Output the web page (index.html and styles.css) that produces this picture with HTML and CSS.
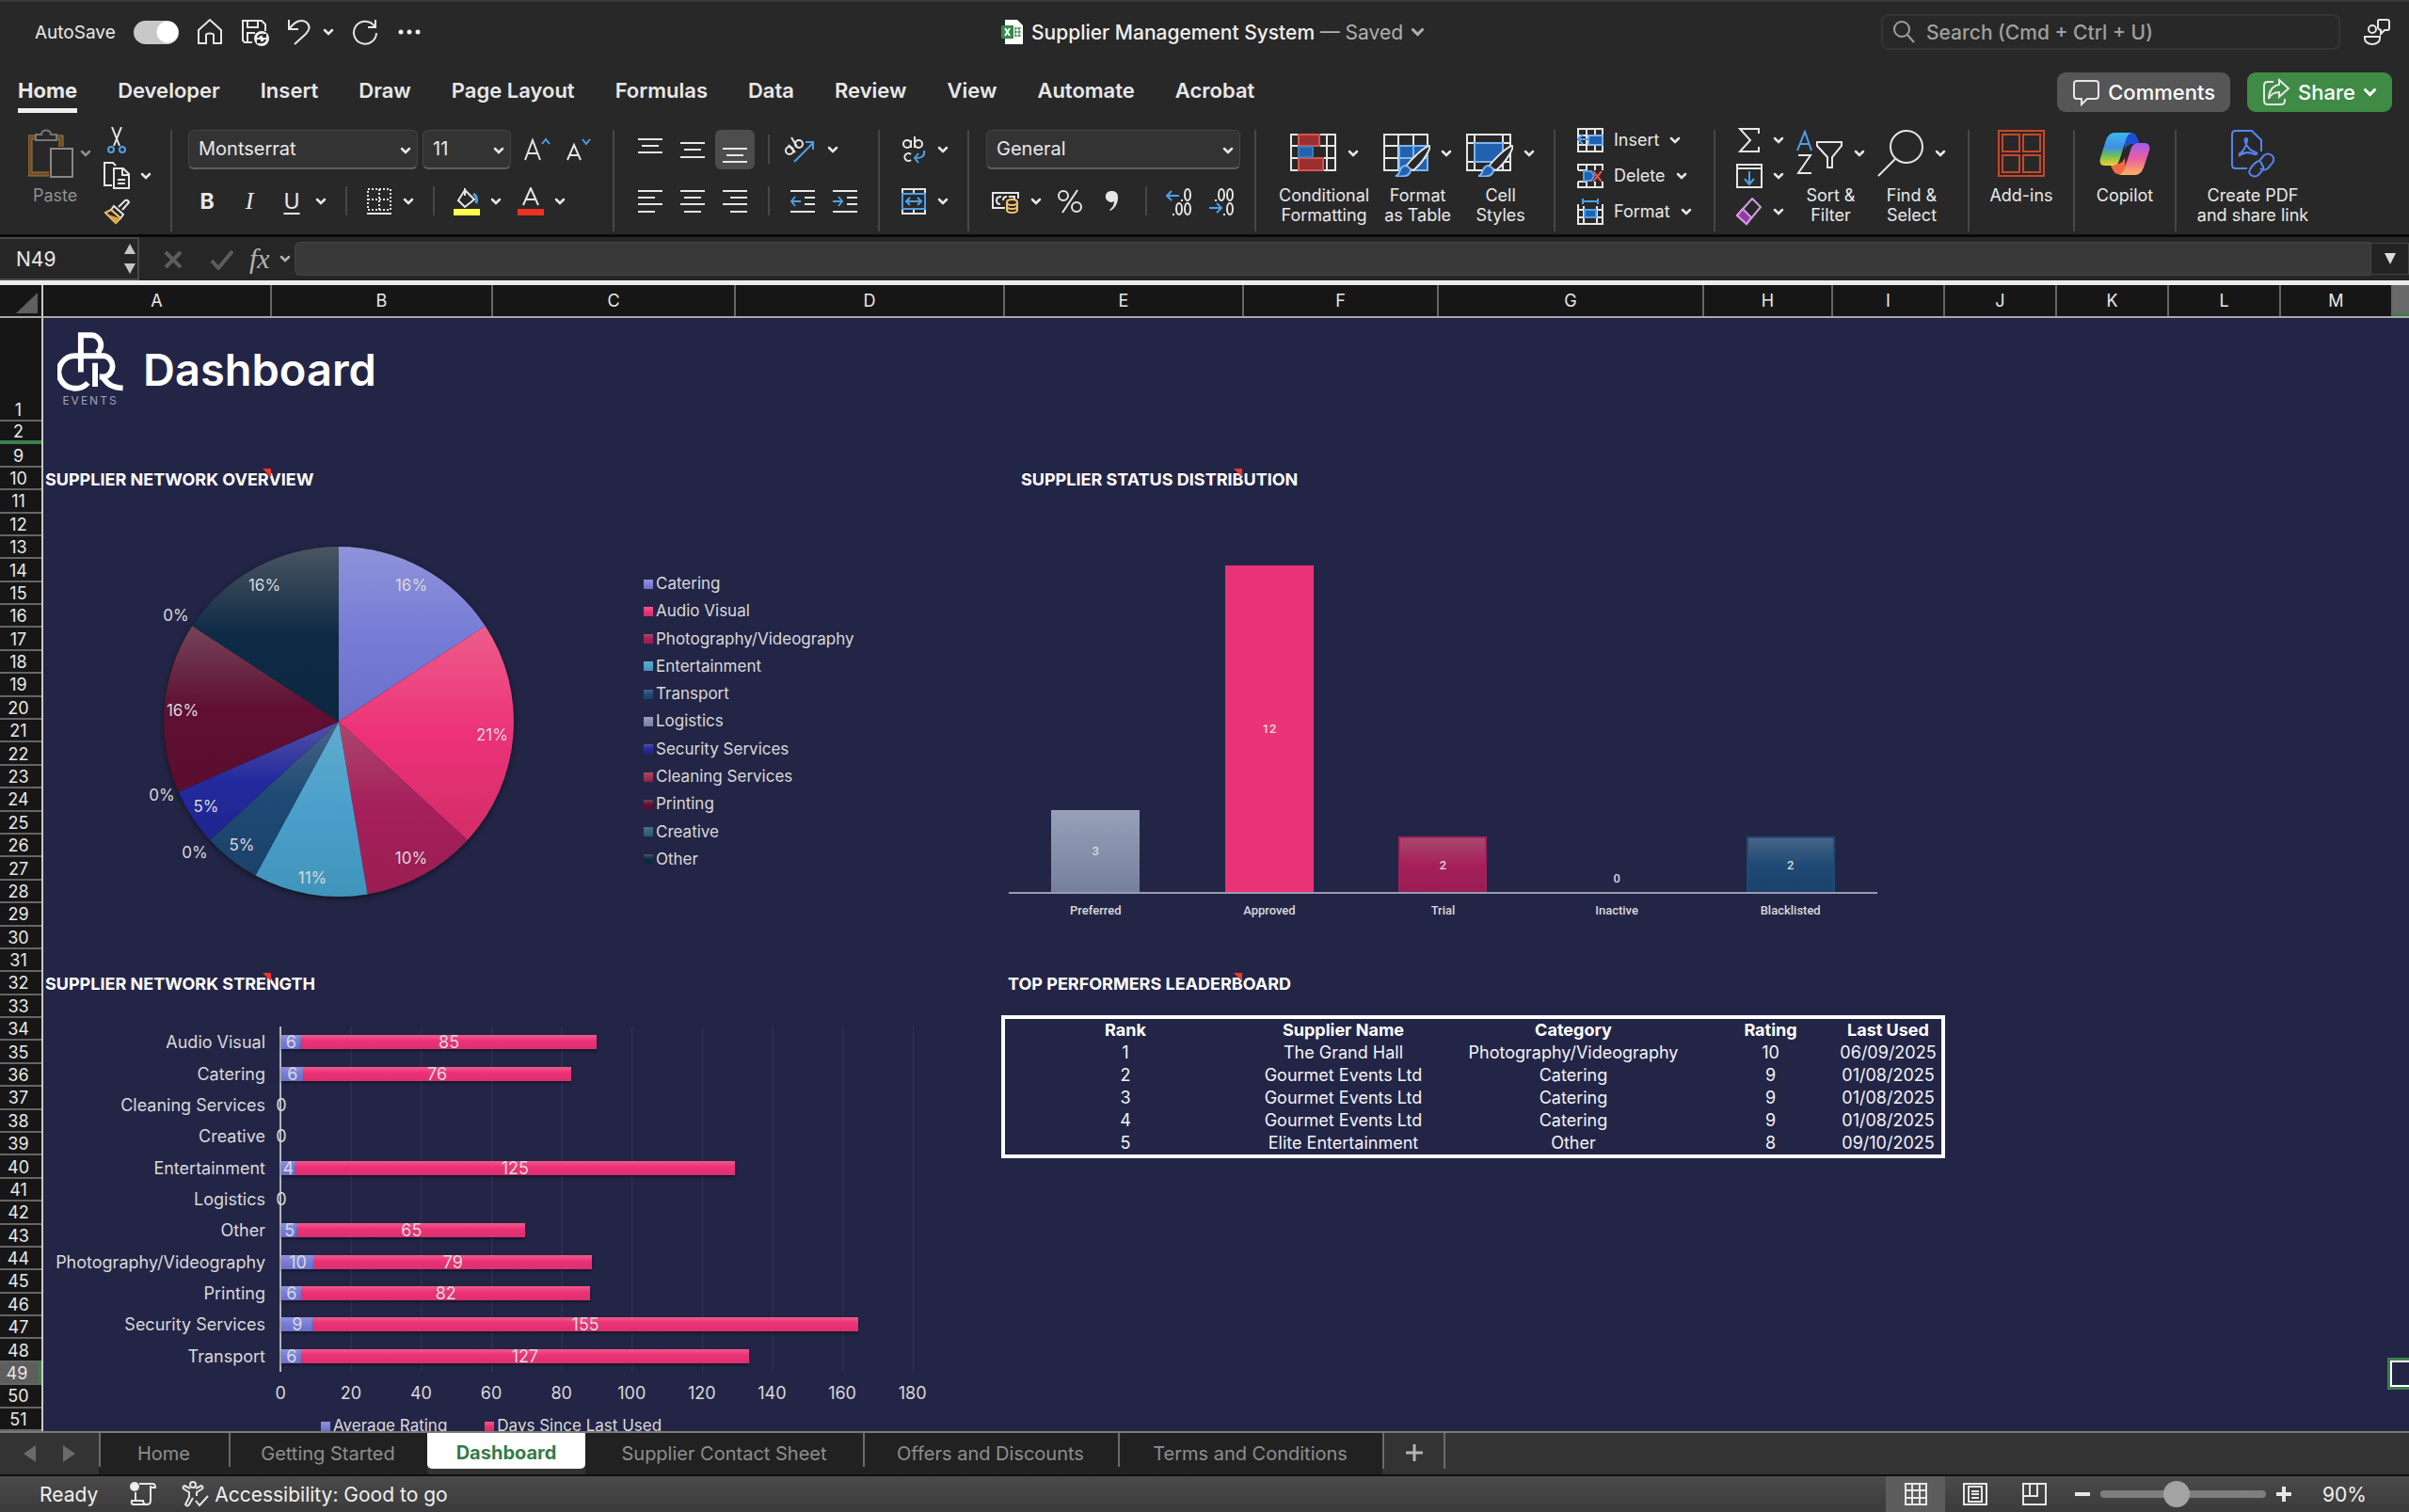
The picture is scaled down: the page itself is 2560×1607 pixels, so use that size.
FILE: index.html
```html
<!DOCTYPE html>
<html lang="en">
<head>
    <meta charset="UTF-8">
    <meta name="viewport" content="width=device-width, initial-scale=1.0">
    <title>Supplier Management System</title>
    <link rel="stylesheet" href="styles.css">
</head>
<body>
    <svg class="defs" width="0" height="0" aria-hidden="true">
        <defs>
            <symbol id="chev" viewBox="0 0 12 8"><path d="M2 2l4 4 4-4" fill="none" stroke="currentColor" stroke-width="2.500" stroke-linecap="round"/></symbol>
            <linearGradient id="g-catering" x2="0" y2="1"><stop offset="0" stop-color="#8f93da"/><stop offset=".5" stop-color="#777cd7"/><stop offset="1" stop-color="#6a6fca"/></linearGradient>
            <linearGradient id="g-av" x2="0" y2="1"><stop offset="0" stop-color="#ec5d8b"/><stop offset=".5" stop-color="#ed3278"/><stop offset="1" stop-color="#d32d68"/></linearGradient>
            <linearGradient id="g-photo" x2="0" y2="1"><stop offset="0" stop-color="#a9486d"/><stop offset=".5" stop-color="#a61f5b"/><stop offset="1" stop-color="#991e52"/></linearGradient>
            <linearGradient id="g-ent" x2="0" y2="1"><stop offset="0" stop-color="#60abce"/><stop offset=".5" stop-color="#4aa0cb"/><stop offset="1" stop-color="#4094bb"/></linearGradient>
            <linearGradient id="g-transport" x2="0" y2="1"><stop offset="0" stop-color="#486486"/><stop offset=".5" stop-color="#1e4a75"/><stop offset="1" stop-color="#1b426a"/></linearGradient>
            <linearGradient id="g-security" x2="0" y2="1"><stop offset="0" stop-color="#5252a8"/><stop offset=".5" stop-color="#232a9d"/><stop offset="1" stop-color="#1f2590"/></linearGradient>
            <linearGradient id="g-printing" x2="0" y2="1"><stop offset="0" stop-color="#744459"/><stop offset=".5" stop-color="#600f32"/><stop offset="1" stop-color="#5a0e2e"/></linearGradient>
            <linearGradient id="g-other" x2="0" y2="1"><stop offset="0" stop-color="#4a5561"/><stop offset=".5" stop-color="#0e2b46"/><stop offset="1" stop-color="#0c2840"/></linearGradient>
        </defs>
    </svg>

    <header class="titlebar">
        <div class="quick">
            <label for="autosave">AutoSave</label>
            <input type="checkbox" class="toggle" id="autosave" checked>
            <button aria-label="Home"><svg width="28" height="30" viewBox="0 0 28 30"><path d="M2 13L14 2l12 11v14h-8v-9c0-2-8-2-8 0v9H2z"/></svg></button>
            <button aria-label="Save"><svg width="30" height="30" viewBox="0 0 30 30"><path d="M12 26H4l-2-2V3h20l4 4v7M7 3v7h11V3M7 26V16h8"/><circle cx="22" cy="22" r="8" fill="#f0f0f0" stroke="none"/><path d="M18 21c1-4 7-4 8-1m0-3v3h-3M26 23c-1 4-7 4-8 1m0 3v-3h3" stroke="#282828"/></svg></button>
            <button class="split" aria-label="Undo"><svg width="26" height="30" viewBox="0 0 26 30"><path d="M2 2v10h10M3 11C9 3 16 1 21 5c4 4 3 8-1 12L8 28"/></svg><svg class="chev"><use href="#chev"/></svg></button>
            <button aria-label="Redo"><svg width="28" height="30" viewBox="0 0 28 30"><path d="M25 2v8h-8M24 9A12 12 0 1 0 26 16"/></svg></button>
            <button aria-label="More"><svg width="28" height="30" viewBox="0 0 28 30"><g fill="#f0f0f0" stroke="none"><circle cx="5" cy="15" r="2.500"/><circle cx="14" cy="15" r="2.500"/><circle cx="23" cy="15" r="2.500"/></g></svg></button>
        </div>
        <button class="doc-title">
            <svg width="24" height="28" viewBox="0 0 24 28"><path d="M4 1h13l6 6v20H4z" fill="#fff" stroke="none"/><path d="M14 10h7M14 14h7M14 18h7M15 9v10M19 9v10" stroke="#2f7d46" stroke-width="1"/><rect x="0" y="7" width="13" height="14" fill="#2f8a4c" stroke="none"/><path d="M4 10l5 8M9 10l-5 8" stroke="#fff"/></svg>
            <span>Supplier Management System <span class="muted">— Saved</span></span>
            <svg class="chev wide muted"><use href="#chev"/></svg>
        </button>
        <div class="title-right">
            <div class="search">
                <svg width="24" height="26" viewBox="0 0 24 26"><circle cx="10" cy="10" r="8"/><path d="M16 16l7 8"/></svg>
                <input type="text" placeholder="Search (Cmd + Ctrl + U)" aria-label="Search">
            </div>
            <button aria-label="Account"><svg width="30" height="30" viewBox="0 0 30 30"><circle cx="10" cy="12" r="4"/><path d="M2 20h16v2c0 3-3 6-8 6s-8-3-8-6zM17 2h9q2 0 2 2v7q0 2-2 2h-3l-4 4v-4q-3-1-3-3V3z"/></svg></button>
        </div>
    </header>

    <nav class="tabs">
        <button class="tab active">Home</button>
        <button class="tab">Developer</button>
        <button class="tab">Insert</button>
        <button class="tab">Draw</button>
        <button class="tab">Page Layout</button>
        <button class="tab">Formulas</button>
        <button class="tab">Data</button>
        <button class="tab">Review</button>
        <button class="tab">View</button>
        <button class="tab">Automate</button>
        <button class="tab">Acrobat</button>
        <div class="tab-actions">
            <button class="pill"><svg width="30" height="30" viewBox="0 0 30 30"><path d="M5 3h20q3 0 3 3v13q0 3-3 3H16l-6 6v-6H5q-3 0-3-3V6q0-3 3-3z"/></svg>Comments</button>
            <button class="pill share"><svg width="30" height="30" viewBox="0 0 30 30"><path d="M12 4H6Q2 4 2 8v16q0 4 4 4h14q4 0 4-4v-2M18 2l10 9-10 9v-5c-5 0-9 2-11 7 0-8 4-14 11-15z"/></svg>Share<svg class="chev wide"><use href="#chev"/></svg></button>
        </div>
    </nav>

    <div class="ribbon">
        <div class="group clipboard">
            <button class="paste">
                <span class="icon-row"><svg width="48" height="54" viewBox="0 0 48 54"><path d="M8 10H2v39h20M30 10h5v10" stroke="#9a7b4a" stroke-width="5"/><path d="M8 10H2v39h20M30 10h5v10" stroke="#714c22" stroke-width="3"/><path d="M8 13V7h6c0-6 10-6 10 0h6v6z" fill="#282828" stroke="#777"/><rect x="24" y="22" width="23" height="30" fill="#282828" stroke="#888"/></svg><svg class="chev"><use href="#chev"/></svg></span>
                <span>Paste</span>
            </button>
            <div class="stack">
                <button aria-label="Cut"><svg width="28" height="28" viewBox="0 0 28 28"><path d="M9 0l8 20M19 0l-8 20"/><g stroke="#4f9fe8" stroke-width="2"><circle cx="8" cy="24" r="3"/><circle cx="20" cy="24" r="3"/></g></svg></button>
                <button class="split" aria-label="Copy"><svg width="28" height="30" viewBox="0 0 28 30"><path d="M9 25H1V1h9l3 3M11 7h10l6 6v15H11zM20 7v7h7M15 19h8M15 23h8"/></svg><svg class="chev"><use href="#chev"/></svg></button>
                <button aria-label="Format Painter"><svg width="28" height="28" viewBox="0 0 28 28"><path d="M16 9l7-7q3-1 4 2l-7 8M11 8l10 9-3 4L8 12z"/><path d="M8 12L2 15l11 11 5-5z" stroke="#eec069" fill="#282828"/><path d="M5 17l12 4-4 5z" fill="#e0a041" stroke="none"/></svg></button>
            </div>
        </div>
        <div class="sep"></div>

        <div class="group rows font-group">
            <div class="row">
                <div class="select font-name"><select aria-label="Font"><option>Montserrat</option></select><svg class="chev"><use href="#chev"/></svg></div>
                <div class="select font-size"><select aria-label="Font size"><option>11</option></select><svg class="chev"><use href="#chev"/></svg></div>
                <button class="grow" aria-label="Increase font size"><svg width="30" height="28" viewBox="0 0 30 28"><path d="M1 25L9 4l8 21M4 18h10"/><path d="M19 8l4-5 4 5" stroke="#4f9fe8"/></svg></button>
                <button class="grow" aria-label="Decrease font size"><svg width="30" height="28" viewBox="0 0 30 28"><path d="M2 25l7-16 7 16M5 20h8"/><path d="M18 3l4 5 4-5" stroke="#4f9fe8"/></svg></button>
            </div>
            <div class="row tools">
                <button class="letter bold">B</button>
                <button class="letter italic">I</button>
                <button class="split"><span class="letter underline">U</span><svg class="chev"><use href="#chev"/></svg></button>
                <div class="sep small"></div>
                <button class="split" aria-label="Borders"><svg width="28" height="30" viewBox="0 0 28 30"><path d="M2 2h24v22H2zM14 2v22M2 13h24" stroke-dasharray="2 2"/><path d="M1 28h26"/></svg><svg class="chev"><use href="#chev"/></svg></button>
                <div class="sep small"></div>
                <button class="split" aria-label="Fill Color"><svg width="28" height="30" viewBox="0 0 28 30"><path d="M12 3l10 10-10 8-7-7zM12 1v8"/><path d="M21 7q5 3 3 10" stroke="#4f9fe8" stroke-width="3"/><rect y="23" width="28" height="7" fill="#fdfd50" stroke="none"/></svg><svg class="chev"><use href="#chev"/></svg></button>
                <button class="split" aria-label="Font Color"><svg width="28" height="30" viewBox="0 0 28 30"><path d="M6 19l8-18 8 18M9 13h10"/><rect y="23" width="28" height="7" fill="#ea3323" stroke="none"/></svg><svg class="chev"><use href="#chev"/></svg></button>
            </div>
        </div>
        <div class="sep"></div>

        <div class="group rows align-group">
            <div class="row">
                <button class="cell-btn" aria-label="Top Align"><svg width="26" height="28" viewBox="0 0 26 28"><path d="M0 3h26M4 10h18M0 17h26"/></svg></button>
                <button class="cell-btn" aria-label="Middle Align"><svg width="26" height="28" viewBox="0 0 26 28"><path d="M0 7h26M4 14h18M0 22h26"/></svg></button>
                <button class="cell-btn on" aria-label="Bottom Align"><svg width="26" height="28" viewBox="0 0 26 28"><path d="M0 13h26M4 20h18M0 27h26"/></svg></button>
                <div class="sep small"></div>
                <button class="split" aria-label="Orientation"><svg width="34" height="30" viewBox="0 0 34 30"><circle cx="5" cy="16" r="4"/><path d="M4 10l7 8"/><circle cx="15" cy="9" r="4"/><path d="M7 2l6 10"/><path d="M10 28L30 8M22 7h8v8" stroke="#4f9fe8"/></svg><svg class="chev"><use href="#chev"/></svg></button>
            </div>
            <div class="row">
                <button class="cell-btn" aria-label="Align Left"><svg width="26" height="28" viewBox="0 0 26 28"><path d="M0 3h26M0 10h18M0 17h26M0 25h18"/></svg></button>
                <button class="cell-btn" aria-label="Center"><svg width="26" height="28" viewBox="0 0 26 28"><path d="M0 3h26M4 10h18M0 17h26M4 25h18"/></svg></button>
                <button class="cell-btn" aria-label="Align Right"><svg width="26" height="28" viewBox="0 0 26 28"><path d="M0 3h26M8 10h18M0 17h26M8 25h18"/></svg></button>
                <div class="sep small"></div>
                <button class="cell-btn" aria-label="Decrease Indent"><svg width="26" height="28" viewBox="0 0 26 28"><path d="M0 3h26M15 10h11M15 17h11M0 25h26"/><path d="M11 14H1M5 9l-4 5 4 5" stroke="#4f9fe8"/></svg></button>
                <button class="cell-btn" aria-label="Increase Indent"><svg width="26" height="28" viewBox="0 0 26 28"><path d="M0 3h26M15 10h11M15 17h11M0 25h26"/><path d="M0 14h10M6 9l4 5-4 5" stroke="#4f9fe8"/></svg></button>
            </div>
        </div>
        <div class="sep"></div>

        <div class="group rows wrap-group">
            <div class="row">
                <button class="split" aria-label="Wrap Text"><svg width="28" height="30" viewBox="0 0 28 30"><circle cx="7" cy="9" r="4"/><path d="M11 5v8M15 1v12M11 20a4 4 0 1 0 0 6"/><circle cx="19" cy="9" r="4"/><path d="M25 16c1 6-2 8-10 8M19 19l-4 5 4 5" stroke="#4f9fe8"/></svg><svg class="chev"><use href="#chev"/></svg></button>
            </div>
            <div class="row">
                <button class="split" aria-label="Merge"><svg width="28" height="30" viewBox="0 0 28 30"><path d="M2 2h24v26H2zM14 2v5M14 23v5"/><path d="M2 7h24v16H2zM6 15h16M10 11l-4 4 4 4M18 11l4 4-4 4" stroke="#4f9fe8"/></svg><svg class="chev"><use href="#chev"/></svg></button>
            </div>
        </div>
        <div class="sep"></div>

        <div class="group rows number-group">
            <div class="row">
                <div class="select format"><select aria-label="Number format"><option>General</option></select><svg class="chev"><use href="#chev"/></svg></div>
            </div>
            <div class="row tools">
                <button class="split" aria-label="Currency"><svg width="30" height="28" viewBox="0 0 30 28"><path d="M14 21H1V5h27v6M10 9q-5 0-5 4t4 4M16 9q-4 0-4 4M18 9h6v3"/><path d="M16 15v8c0 4 11 4 11 0v-8c0-4-11-4-11 0s11 4 11 0M16 19c0 4 11 4 11 0" stroke="#efc56c" fill="#282828"/></svg><svg class="chev"><use href="#chev"/></svg></button>
                <button aria-label="Percent"><svg width="28" height="28" viewBox="0 0 28 28"><circle cx="6" cy="8" r="5"/><circle cx="20" cy="20" r="5"/><path d="M21 2L5 26"/></svg></button>
                <button aria-label="Comma"><svg width="28" height="28" viewBox="0 0 28 28"><path d="M13 3a6 6 0 0 1 6 7c0 7-4 12-8 14l-1-1c3-2 5-5 5-9a6 6 0 1 1-2-11z" fill="#e6e6e6" stroke="none"/></svg></button>
                <div class="sep small"></div>
                <button aria-label="Increase Decimal"><svg width="28" height="30" viewBox="0 0 28 30"><path d="M14 9H1M6 4L1 9l5 5" stroke="#4f9fe8"/><ellipse cx="23" cy="8" rx="3" ry="6"/><ellipse cx="14" cy="23" rx="3" ry="6"/><ellipse cx="23" cy="23" rx="3" ry="6"/><path d="M17 13v2M8 28v2"/></svg></button>
                <button aria-label="Decrease Decimal"><svg width="28" height="30" viewBox="0 0 28 30"><path d="M1 22h13M9 17l5 5-5 5" stroke="#4f9fe8"/><ellipse cx="14" cy="8" rx="3" ry="6"/><ellipse cx="23" cy="8" rx="3" ry="6"/><ellipse cx="23" cy="23" rx="3" ry="6"/><path d="M8 13v2M17 28v2"/></svg></button>
            </div>
        </div>
        <div class="sep"></div>

        <div class="group styles-group">
            <button class="big">
                <span class="icon-row"><svg width="50" height="50" viewBox="0 0 50 50"><path d="M1 5h47v38H1zM1 17h47M1 30h47M9 5v38M39 5v38"/><g stroke-width="2"><path d="M9 5h22v12H9zM9 30h26v13H9z" fill="#9c2f2f" stroke="#d9534f"/><path d="M9 18h15v11H9z" fill="#2460ad" stroke="#3d7cb8"/></g></svg><svg class="chev"><use href="#chev"/></svg></span>
                <span>Conditional<br>Formatting</span>
            </button>
            <button class="big">
                <span class="icon-row"><svg width="50" height="50" viewBox="0 0 50 50"><path d="M1 5h46v38H1zM1 17h46M1 30h46M16 5v38M32 5v38"/><path d="M17 17h30v26H17z" fill="#2260b0" stroke="#7db5ec"/><path d="M32 17v26M17 30h30" stroke="#7db5ec"/><path d="M23 40C29 32 43 18 49 17c2 2-6 17-17 26z" fill="#282828"/><path d="M13 49c6-1 3-10 10-11 9 1 9 14-10 11z" fill="#2260b0" stroke="#7db5ec"/></svg><svg class="chev"><use href="#chev"/></svg></span>
                <span>Format<br>as Table</span>
            </button>
            <button class="big">
                <span class="icon-row"><svg width="50" height="50" viewBox="0 0 50 50"><path d="M1 5h46v38H1zM1 14h46M1 34h46M9 5v38M39 5v38"/><path d="M9 14h30v20H9z" fill="#2260b0" stroke="#7db5ec"/><path d="M23 40C29 32 43 18 49 17c2 2-6 17-17 26z" fill="#282828"/><path d="M13 49c6-1 3-10 10-11 9 1 9 14-10 11z" fill="#2260b0" stroke="#7db5ec"/></svg><svg class="chev"><use href="#chev"/></svg></span>
                <span>Cell<br>Styles</span>
            </button>
        </div>
        <div class="sep"></div>

        <div class="group cells-group">
            <div class="stack">
                <button class="split"><svg width="28" height="26" viewBox="0 0 28 26"><path d="M1 1h26v24H1zM1 8h26M1 18h26M10 1v24M19 1v24"/><path d="M12 8h15v10H12z" fill="#2260b0" stroke="#7db5ec"/><path d="M13 12H0M6 7l-5 5 5 5" stroke="#4f9fe8"/></svg>Insert<svg class="chev"><use href="#chev"/></svg></button>
                <button class="split"><svg width="28" height="26" viewBox="0 0 28 26"><path d="M1 7V1h26v6M1 19v6h26v-6M10 1v6M19 1v6M10 19v6M19 19v6M1 7h8M1 19h8"/><path d="M7 8h8l3 5-3 5H7z" fill="#2260b0" stroke="#4f9fe8"/><path d="M17 8l9 11M26 8l-9 11" stroke="#e5524d"/></svg>Delete<svg class="chev"><use href="#chev"/></svg></button>
                <button class="split"><svg width="28" height="28" viewBox="0 0 28 28"><path d="M1 6v21h26V6M1 12h26M1 20h26M7 8v19M21 8v19"/><path d="M8 12h12v8H8z" fill="#2260b0" stroke="#4f9fe8"/><path d="M6 0v6M22 0v6M6 3h16" stroke="#4f9fe8"/></svg>Format<svg class="chev"><use href="#chev"/></svg></button>
            </div>
        </div>
        <div class="sep"></div>

        <div class="group editing-group">
            <div class="stack">
                <button class="split" aria-label="AutoSum"><svg width="28" height="28" viewBox="0 0 28 28"><path d="M24 7V2H4l11 12L4 26h20v-5"/></svg><svg class="chev"><use href="#chev"/></svg></button>
                <button class="split" aria-label="Fill"><svg width="28" height="28" viewBox="0 0 28 28"><path d="M1 2h26v24H1zM1 6h26"/><path d="M14 9v14M9 17l5 6 5-6" stroke="#4f9fe8"/></svg><svg class="chev"><use href="#chev"/></svg></button>
                <button class="split" aria-label="Clear"><svg width="28" height="30" viewBox="0 0 28 30"><path d="M1 19L17 1l9 9-15 18z" stroke="#d49be0"/><path d="M1 19l6-7 9 9-5 7z" fill="#8f3aa5" stroke="#d49be0"/></svg><svg class="chev"><use href="#chev"/></svg></button>
            </div>
            <button class="big">
                <span class="icon-row"><svg width="50" height="50" viewBox="0 0 50 50"><path d="M1 22L9 2l7 20M4 15h10" stroke="#4f9fe8"/><path d="M2 27h13L2 46h14M22 13h26v4L38 29v11h-5V29L22 17z"/></svg><svg class="chev"><use href="#chev"/></svg></span>
                <span>Sort &amp;<br>Filter</span>
            </button>
            <button class="big">
                <span class="icon-row"><svg width="50" height="50" viewBox="0 0 50 50"><circle cx="31" cy="18" r="17"/><path d="M19 31L1 49"/></svg><svg class="chev"><use href="#chev"/></svg></span>
                <span>Find &amp;<br>Select</span>
            </button>
        </div>
        <div class="sep"></div>

        <div class="group addins-group">
            <button class="big">
                <span class="icon-row"><svg width="50" height="50" viewBox="0 0 50 50"><path d="M1 1h48v48H1zM5 5h18v18H5zM27 5h18v18H27zM5 27h18v18H5zM27 27h18v18H27z" stroke="#c8472a"/></svg></span>
                <span>Add-ins</span>
            </button>
        </div>
        <div class="sep"></div>

        <div class="group copilot-group">
            <button class="big">
                <span class="icon-row"><svg width="54" height="50" viewBox="0 0 54 50"><defs><linearGradient id="cp1" x2="0" y2="1"><stop offset="0" stop-color="#3bb7f0"/><stop offset=".45" stop-color="#3f8fe0"/><stop offset=".7" stop-color="#6fc05a"/><stop offset="1" stop-color="#f3d12e"/></linearGradient><linearGradient id="cp2" x2="0" y2="1"><stop offset="0" stop-color="#a25bf0"/><stop offset=".5" stop-color="#ee5f9c"/><stop offset="1" stop-color="#fbb660"/></linearGradient></defs><g stroke="none"><path d="M26 3h8q4 0 6 5l3 7h-8q-6 0-8 6z" fill="#1f4fd0"/><path d="M28 47h-8q-4 0-6-5l-3-6h8q6 0 8-7z" fill="#f26a45"/><path d="M16 3h18q-4 1-6 8l-6 19q-2 8-8 8H6q-7 0-5-8L7 11Q10 3 16 3z" fill="url(#cp1)"/><path d="M38 48H20q5-1 7-8l6-18q2-8 8-8h6q8 0 6 8l-6 18q-3 8-9 8z" fill="url(#cp2)"/></g></svg></span>
                <span>Copilot</span>
            </button>
        </div>
        <div class="sep"></div>

        <div class="group pdf-group">
            <button class="big">
                <span class="icon-row"><svg width="46" height="52" viewBox="0 0 46 52"><g stroke="#5685f0" stroke-width="2"><path d="M17 42H5q-4 0-4-4V6q0-4 4-4h17l10 10v12"/><path d="M8 27c6-3 8-9 9-15 1-3-4-3-2 2 2 6 5 9 11 11 3 1 1 3-4 1s-9-1-14 3"/><path d="M30 34l5-6q4-3 8 0t1 8l-5 6q-4 3-8 0M33 37l-3-3q-3 0-8 6t-1 9 8 0l5-6q1-3-2-6"/></g></svg></span>
                <span>Create PDF<br>and share link</span>
            </button>
        </div>
    </div>

    <div class="formula-bar">
        <div class="name-box">
            <input type="text" value="N49" aria-label="Name box">
            <svg width="14" height="36" viewBox="0 0 14 36"><path d="M1 13L7 2l6 11zM1 23h12L7 34z" fill="#c4c4c4" stroke="none"/></svg>
        </div>
        <button aria-label="Cancel"><svg width="22" height="24" viewBox="0 0 22 24"><path d="M3 5l16 16M19 5L3 21" stroke="#5c5c5c" stroke-width="4"/></svg></button>
        <button class="enter" aria-label="Enter"><svg width="26" height="24" viewBox="0 0 26 24"><path d="M2 14l7 8L24 4" stroke="#5c5c5c" stroke-width="4"/></svg></button>
        <button class="fx">fx<svg class="chev"><use href="#chev"/></svg></button>
        <input type="text" class="formula" aria-label="Formula">
        <button class="expand" aria-label="Expand formula bar"><svg width="14" height="14" viewBox="0 0 14 14"><path d="M1 1h12L7 13z" fill="#dcdcdc" stroke="none"/></svg></button>
    </div>

    <main class="sheet">
        <div class="corner"><svg width="24" height="22" viewBox="0 0 24 22"><path d="M23 0v22H0z" fill="#5f5f5f" stroke="none"/></svg></div>
        <div class="col-heads">
            <span class="c-a">A</span><span class="c-b">B</span><span class="c-c">C</span><span class="c-d">D</span><span class="c-e">E</span><span class="c-f">F</span><span class="c-g">G</span><span class="c-h">H</span><span class="c-n">I</span><span class="c-n">J</span><span class="c-n">K</span><span class="c-n">L</span><span class="c-n">M</span><span class="current"></span>
        </div>
        <div class="row-heads">
            <span class="tall">1</span><span class="frozen">2</span>
            <span>9</span><span>10</span><span>11</span><span>12</span><span>13</span><span>14</span><span>15</span><span>16</span><span>17</span><span>18</span><span>19</span>
            <span>20</span><span>21</span><span>22</span><span>23</span><span>24</span><span>25</span><span>26</span><span>27</span><span>28</span><span>29</span>
            <span>30</span><span>31</span><span>32</span><span>33</span><span>34</span><span>35</span><span>36</span><span>37</span><span>38</span><span>39</span>
            <span>40</span><span>41</span><span>42</span><span>43</span><span>44</span><span>45</span><span>46</span><span>47</span><span>48</span><span class="current">49</span>
            <span>50</span><span>51</span>
        </div>

        <div class="canvas">
            <div class="banner">
                <div class="logo">
                    <svg width="70" height="63" viewBox="144 31 166 148"><g stroke="#fff" stroke-width="14"><path d="M203 131V38h26a24 25 0 0 1 15 45M221 158a42 41 0 1 1-31-68h72a26 27 0 0 1 0 53h-12M239 168v-60M258 143c11 17 22 27 51 28"/></g></svg>
                    <span>EVENTS</span>
                </div>
                <h1>Dashboard</h1>
            </div>

            <section class="panel">
                <h2 class="note">SUPPLIER NETWORK OVERVIEW</h2>
                <div class="pie-chart">
                    <svg class="pie" width="440" height="420" viewBox="-220 -210 440 420">
                        <g class="slices">
                            <path d="M0 0V-186A186 186 0 0 1 155.700 -101.700Z" fill="url(#g-catering)"/>
                            <path d="M0 0L155.700 -101.700A186 186 0 0 1 136.800 126Z" fill="url(#g-av)"/>
                            <path d="M0 0L136.800 126A186 186 0 0 1 30.600 183.500Z" fill="url(#g-photo)"/>
                            <path d="M0 0L30.600 183.500A186 186 0 0 1 -88.500 163.600Z" fill="url(#g-ent)"/>
                            <path d="M0 0L-88.500 163.600A186 186 0 0 1 -136.800 126Z" fill="url(#g-transport)"/>
                            <path d="M0 0L-136.800 126A186 186 0 0 1 -170.300 74.700Z" fill="url(#g-security)"/>
                            <path d="M0 0L-170.300 74.700A186 186 0 0 1 -155.700 -101.700Z" fill="url(#g-printing)"/>
                            <path d="M0 0L-155.700 -101.700A186 186 0 0 1 0 -186Z" fill="url(#g-other)"/>
                        </g>
                        <text x="77" y="-139">16%</text>
                        <text x="163" y="20">21%</text>
                        <text x="77" y="151">10%</text>
                        <text x="-28" y="172">11%</text>
                        <text x="-103" y="137">5%</text>
                        <text x="-153" y="145">0%</text>
                        <text x="-141" y="96">5%</text>
                        <text x="-188" y="84">0%</text>
                        <text x="-166" y="-6">16%</text>
                        <text x="-173" y="-107">0%</text>
                        <text x="-79" y="-139">16%</text>
                    </svg>
                    <ul class="legend">
                        <li class="catering">Catering</li>
                        <li class="av">Audio Visual</li>
                        <li class="photo">Photography/Videography</li>
                        <li class="ent">Entertainment</li>
                        <li class="transport">Transport</li>
                        <li class="logistics">Logistics</li>
                        <li class="security">Security Services</li>
                        <li class="cleaning">Cleaning Services</li>
                        <li class="printing">Printing</li>
                        <li class="creative">Creative</li>
                        <li class="other">Other</li>
                    </ul>
                </div>
            </section>

            <section class="panel right">
                <h2 class="note indent">SUPPLIER STATUS DISTRIBUTION</h2>
                <div class="columns">
                    <div class="col"><div class="fill preferred" style="height: 25%">3</div></div>
                    <div class="col"><div class="fill approved" style="height: 100%">12</div></div>
                    <div class="col"><div class="fill trial" style="height: 17%">2</div></div>
                    <div class="col"><div class="fill none">0</div></div>
                    <div class="col"><div class="fill blacklisted" style="height: 17%">2</div></div>
                </div>
                <div class="column-labels"><span>Preferred</span><span>Approved</span><span>Trial</span><span>Inactive</span><span>Blacklisted</span></div>
            </section>

            <section class="panel">
                <h2 class="note">SUPPLIER NETWORK STRENGTH</h2>
                <div class="bars">
                    <div class="bar-row"><span>Audio Visual</span><div class="track"><div class="bar rating" style="width: 3.1%">6</div><div class="bar days" style="width: 46.8%">85</div></div></div>
                    <div class="bar-row"><span>Catering</span><div class="track"><div class="bar rating" style="width: 3.5%">6</div><div class="bar days" style="width: 42.3%">76</div></div></div>
                    <div class="bar-row"><span>Cleaning Services</span><div class="track"><div class="bar" style="width: 0">0</div></div></div>
                    <div class="bar-row"><span>Creative</span><div class="track"><div class="bar" style="width: 0">0</div></div></div>
                    <div class="bar-row"><span>Entertainment</span><div class="track"><div class="bar rating" style="width: 2.2%">4</div><div class="bar days" style="width: 69.5%">125</div></div></div>
                    <div class="bar-row"><span>Logistics</span><div class="track"><div class="bar" style="width: 0">0</div></div></div>
                    <div class="bar-row"><span>Other</span><div class="track"><div class="bar rating" style="width: 2.6%">5</div><div class="bar days" style="width: 36%">65</div></div></div>
                    <div class="bar-row"><span>Photography/Videography</span><div class="track"><div class="bar rating" style="width: 5.2%">10</div><div class="bar days" style="width: 43.9%">79</div></div></div>
                    <div class="bar-row"><span>Printing</span><div class="track"><div class="bar rating" style="width: 3.2%">6</div><div class="bar days" style="width: 45.6%">82</div></div></div>
                    <div class="bar-row"><span>Security Services</span><div class="track"><div class="bar rating" style="width: 5%">9</div><div class="bar days" style="width: 86.2%">155</div></div></div>
                    <div class="bar-row"><span>Transport</span><div class="track"><div class="bar rating" style="width: 3.2%">6</div><div class="bar days" style="width: 70.7%">127</div></div></div>
                </div>
                <div class="axis"><span>0</span><span>20</span><span>40</span><span>60</span><span>80</span><span>100</span><span>120</span><span>140</span><span>160</span><span>180</span></div>
                <ul class="legend inline">
                    <li class="catering">Average Rating</li>
                    <li class="av">Days Since Last Used</li>
                </ul>
            </section>

            <section class="panel right">
                <h2 class="note">TOP PERFORMERS LEADERBOARD</h2>
                <table class="leaderboard">
                    <thead>
                        <tr><th class="c-rank">Rank</th><th class="c-f">Supplier Name</th><th class="c-g">Category</th><th class="c-h">Rating</th><th>Last Used</th></tr>
                    </thead>
                    <tbody>
                        <tr><td>1</td><td>The Grand Hall</td><td>Photography/Videography</td><td>10</td><td>06/09/2025</td></tr>
                        <tr><td>2</td><td>Gourmet Events Ltd</td><td>Catering</td><td>9</td><td>01/08/2025</td></tr>
                        <tr><td>3</td><td>Gourmet Events Ltd</td><td>Catering</td><td>9</td><td>01/08/2025</td></tr>
                        <tr><td>4</td><td>Gourmet Events Ltd</td><td>Catering</td><td>9</td><td>01/08/2025</td></tr>
                        <tr><td>5</td><td>Elite Entertainment</td><td>Other</td><td>8</td><td>09/10/2025</td></tr>
                    </tbody>
                </table>
            </section>
            <div class="selection"></div>
        </div>
    </main>

    <nav class="sheet-tabs">
        <div class="scroll">
            <button aria-label="Previous sheet"><svg width="14" height="18" viewBox="0 0 14 18"><path d="M13 0v18L0 9z" fill="#6a6a6a" stroke="none"/></svg></button>
            <button aria-label="Next sheet"><svg width="14" height="18" viewBox="0 0 14 18"><path d="M1 0v18l13-9z" fill="#6a6a6a" stroke="none"/></svg></button>
        </div>
        <button class="sheet-tab">Home</button>
        <button class="sheet-tab">Getting Started</button>
        <button class="sheet-tab active">Dashboard</button>
        <button class="sheet-tab">Supplier Contact Sheet</button>
        <button class="sheet-tab">Offers and Discounts</button>
        <button class="sheet-tab">Terms and Conditions</button>
        <button class="sheet-tab add" aria-label="Add sheet"><svg width="18" height="18" viewBox="0 0 18 18"><path d="M9 0v18M0 9h18" stroke="#b4b4b4" stroke-width="3"/></svg></button>
    </nav>

    <footer class="status">
        <span>Ready</span>
        <svg class="macro" width="28" height="26" viewBox="0 0 28 26"><circle cx="5" cy="5" r="4" fill="#f0f0f0"/><path d="M10 2h14q3 0 3 4h-5M22 4v16q0 4-4 4H4q-3 0-2-4h12q0 4 4 4M6 11v9"/></svg>
        <button class="access"><svg width="30" height="28" viewBox="0 0 30 28"><circle cx="12" cy="4" r="3"/><path d="M9 8L3 5Q0 7 3 9l5 3v5L4 25q2 3 4 0l4-7M15 8l6-3q3 2 0 4l-5 3v4M15 21l4 5 9-10"/></svg>Accessibility: Good to go</button>
        <div class="views">
            <button class="view on" aria-label="Normal view"><svg width="26" height="26" viewBox="0 0 26 26"><path d="M2 2h22v22H2zM9 2v22M17 2v22M2 9h22M2 17h22"/></svg></button>
            <button class="view" aria-label="Page layout view"><svg width="26" height="26" viewBox="0 0 26 26"><path d="M1 2h24v22H1zM6 5h14v16H6zM9 10h8M9 13h8M9 17h8"/></svg></button>
            <button class="view" aria-label="Page break view"><svg width="26" height="26" viewBox="0 0 26 26"><path d="M1 2h24v22H1zM8 2v13M1 15h15V2"/></svg></button>
        </div>
        <button aria-label="Zoom out"><svg width="16" height="16" viewBox="0 0 16 16"><path d="M0 8h16" stroke-width="4"/></svg></button>
        <input type="range" class="zoom" min="0" max="100" value="45" aria-label="Zoom">
        <button aria-label="Zoom in"><svg width="16" height="16" viewBox="0 0 16 16"><path d="M0 8h16M8 0v16" stroke-width="4"/></svg></button>
        <span class="percent">90%</span>
    </footer>
</body>
</html>
```
FILE: styles.css
```css
:root {
    --chrome: #282828;
    --canvas: #232546;
    --head: #161616;
    --text: #e8e8e8;
    --label: #d9d9d9;
    --green: #3d7f4c;
}

* {
    box-sizing: border-box;
    margin: 0;
    padding: 0;
}

body {
    font-family: Inter, "Liberation Sans", sans-serif;
    font-size: 18px;
    color: var(--text);
    background: var(--chrome);
    height: 100vh;
    display: flex;
    flex-direction: column;
    overflow: hidden;
}

button, input, select {
    font: inherit;
    color: inherit;
    background: none;
    border: none;
    outline: none;
}

button {
    display: flex;
    align-items: center;
    justify-content: center;
}

svg {
    flex: none;
    fill: none;
    stroke: #e6e6e6;
    stroke-width: 2;
}

ul {
    list-style: none;
}

.defs {
    position: absolute;
}

.chev {
    width: 12px;
    height: 8px;
    stroke: none;
}

.chev.wide {
    width: 15px;
    height: 10px;
}

.muted {
    color: #b0b0b0;
}

/* Title bar */
.titlebar {
    display: flex;
    align-items: center;
    justify-content: space-between;
    height: 66px;
    padding: 0 19px 0 37px;
    border-top: 2px solid #3a3a3a;
}

.quick {
    display: flex;
    align-items: center;
    flex: 1;
    gap: 19px;
}

.quick label {
    font-size: 19px;
}

.quick .split {
    gap: 12px;
}

.toggle {
    appearance: none;
    width: 48px;
    height: 25px;
    border-radius: 13px;
    background: radial-gradient(circle at 36px 12px, #fff 11px, transparent 12px), #c8c8c8;
}

.doc-title {
    gap: 8px;
    font-size: 21px;
    font-weight: 500;
    color: #f0f0f0;
}

.doc-title .muted {
    font-weight: 400;
}

.title-right {
    display: flex;
    align-items: center;
    justify-content: flex-end;
    flex: 1;
    gap: 24px;
}

.search {
    display: flex;
    align-items: center;
    gap: 12px;
    width: 488px;
    height: 38px;
    padding: 0 10px;
    border: 2px solid #353535;
    border-radius: 8px;
}

.search svg {
    stroke: #a0a0a0;
}

.search input {
    flex: 1;
    font-size: 21px;
    font-weight: 500;
}

.search input::placeholder {
    color: #a0a0a0;
}

/* Ribbon tabs */
.tabs {
    display: flex;
    align-items: center;
    height: 64px;
    padding: 0 18px 0 19px;
    gap: 43px;
}

.tab {
    font-size: 22px;
    font-weight: 600;
    line-height: 30px;
    padding: 4px 0;
    border-bottom: 5px solid transparent;
}

.tab.active {
    font-weight: 700;
    border-bottom-color: #efefef;
}

.tab-actions {
    display: flex;
    gap: 18px;
    margin-left: auto;
}

.pill {
    gap: 8px;
    height: 42px;
    padding: 0 16px;
    border-radius: 9px;
    background: #565656;
    color: #fff;
    font-size: 22px;
    font-weight: 500;
}

.pill.share {
    background: #3f8b45;
}

/* Ribbon */
.ribbon {
    display: flex;
    align-items: center;
    height: 122px;
    padding-top: 4px;
    border-bottom: 3px solid #0a0a0a;
}

.sep {
    flex: none;
    width: 2px;
    height: 108px;
    background: #474747;
}

.sep.small {
    height: 31px;
    margin: 0 3px;
}

.group {
    flex: none;
    display: flex;
    height: 108px;
}

.row, .split, .icon-row {
    display: flex;
    align-items: center;
}

.rows {
    flex-direction: column;
    gap: 13px;
}

.row {
    height: 42px;
}

.split {
    gap: 11px;
}

.stack {
    display: flex;
    flex-direction: column;
    justify-content: space-between;
    align-items: flex-start;
    height: 98px;
}

.stack button {
    height: 22px;
}

.clipboard {
    width: 181px;
    padding-left: 30px;
    gap: 14px;
}

.paste, .big {
    flex-direction: column;
    justify-content: flex-start;
    align-items: center;
    line-height: 21px;
    text-align: center;
}

.big {
    min-width: 72px;
    gap: 9px;
}

.icon-row {
    gap: 11px;
    height: 50px;
}

.paste {
    align-items: flex-start;
    gap: 9px;
    width: 66px;
    color: #909090;
}

.paste .icon-row {
    gap: 7px;
}

.paste > span:last-child {
    padding-left: 5px;
}

.font-group {
    width: 468px;
    padding-left: 17px;
}

.select {
    position: relative;
    height: 42px;
    background: #333;
    border: 1px solid #444;
    border-bottom: 2px solid #5e5e5e;
    border-radius: 6px;
}

.select select {
    appearance: none;
    width: 100%;
    height: 100%;
    padding-left: 10px;
    font-size: 20px;
}

.select .chev {
    position: absolute;
    right: 6px;
    top: 17px;
}

.font-name {
    width: 244px;
    margin-right: 5px;
}

.font-size {
    width: 94px;
}

.grow {
    margin-left: 14px;
}

.tools {
    gap: 17px;
    padding-left: 6px;
}

.letter {
    width: 28px;
    font-size: 23px;
    text-align: center;
}

.bold {
    font-weight: 700;
}

.italic {
    font-family: "Liberation Serif", serif;
    font-style: italic;
    font-size: 26px;
}

.underline {
    text-decoration: underline;
    text-underline-offset: 4px;
}

.align-group {
    width: 280px;
    padding-left: 17px;
}

.align-group .row {
    gap: 3px;
}

.align-group .sep {
    margin: 0 11px;
}

.align-group .split {
    margin-left: 2px;
}

.cell-btn {
    width: 42px;
    height: 42px;
    border-radius: 6px;
}

.cell-btn.on {
    background: #4d4d4d;
}

.wrap-group {
    width: 93px;
    padding-left: 22px;
}

.number-group {
    width: 303px;
    padding-left: 18px;
}

.format {
    width: 270px;
}

.styles-group {
    width: 316px;
    padding-left: 24px;
    gap: 15px;
}

.cells-group {
    width: 168px;
    padding-left: 23px;
}

.editing-group {
    width: 268px;
    padding-left: 22px;
    gap: 13px;
}

.addins-group {
    width: 110px;
    justify-content: center;
}

.copilot-group {
    width: 106px;
    justify-content: center;
}

.pdf-group {
    width: 162px;
    justify-content: center;
}

/* Formula bar */
.formula-bar {
    display: flex;
    align-items: center;
    height: 46px;
    background: #262626;
}

.name-box {
    display: flex;
    align-items: center;
    width: 148px;
    height: 46px;
    padding: 0 1px 0 17px;
    border: 2px solid #484848;
    border-left: none;
    margin-right: 25px;
}

.name-box input {
    flex: 1;
    min-width: 0;
    font-size: 21px;
}

.enter {
    margin-left: 28px;
}

.fx {
    gap: 10px;
    margin: 0 4px 0 16px;
    font-family: "Liberation Serif", serif;
    font-style: italic;
    font-size: 30px;
    color: #b4b4b4;
}

.formula {
    flex: 1;
    height: 36px;
    background: #393939;
    border: 1px solid #444;
    border-right: none;
    border-radius: 6px 0 0 6px;
}

.expand {
    width: 41px;
    height: 34px;
    background: #232323;
    border: 1px solid #444;
}

/* Sheet */
.sheet {
    flex: 1;
    min-height: 0;
    display: grid;
    grid-template-columns: 46px 1fr;
    grid-template-rows: 35px 1fr;
    border-top: 5px solid #ececec;
    overflow: hidden;
}

.corner {
    display: flex;
    justify-content: flex-end;
    align-items: flex-end;
    padding: 0 3px 3px 0;
    background: var(--head);
    border-right: 2px solid #c9c9c9;
    border-bottom: 2px solid #a8a8a8;
}

.col-heads {
    display: flex;
    background: var(--head);
    border-bottom: 2px solid #a8a8a8;
    overflow: hidden;
}

.col-heads span {
    flex: none;
    line-height: 33px;
    text-align: center;
    border-right: 2px solid #666;
}

.col-heads .current {
    flex: 1;
    background: #6a6a6a;
    border-right: none;
    border-bottom: 3px solid var(--green);
}

.c-a { width: 243px; }
.c-b { width: 235px; }
.c-c { width: 258px; }
.c-d { width: 286px; }
.c-e { width: 254px; }
.c-f { width: 207px; }
.c-g { width: 282px; }
.c-h { width: 137px; }
.c-n { width: 119px; }
.c-rank { width: 258px; }

.row-heads {
    display: grid;
    grid-template-rows: 110px repeat(44, 1fr);
    background: var(--head);
    border-right: 2px solid #c9c9c9;
    min-height: 0;
}

.row-heads span {
    display: flex;
    align-items: center;
    justify-content: center;
    min-height: 0;
    padding: 2px 5px 0 0;
    line-height: 20px;
    border-bottom: 2px solid #666;
}

.row-heads .tall {
    align-items: flex-end;
}

.row-heads .frozen {
    border-bottom: 4px solid var(--green);
}

.row-heads .current {
    background: #5e5e5e;
    border-right: 3px solid var(--green);
}

.canvas {
    position: relative;
    display: grid;
    grid-template-columns: 1018px 1fr;
    grid-template-rows: 159px 536px 1fr;
    min-height: 0;
    background: var(--canvas);
    overflow: hidden;
}

.banner {
    grid-column: 1 / -1;
    display: flex;
    align-items: flex-start;
    gap: 21px;
    padding: 15px;
    color: #fff;
}

.logo {
    display: flex;
    flex-direction: column;
    align-items: center;
    color: #a0a3b8;
    font-size: 12px;
    line-height: 20px;
    letter-spacing: 2px;
}

.banner h1 {
    font-size: 47px;
    font-weight: 600;
    line-height: 80px;
}

.panel {
    min-width: 0;
    min-height: 0;
}

.note {
    position: relative;
    width: 242px;
    padding-left: 2px;
    font-size: 18px;
    font-weight: 700;
    line-height: 25px;
    white-space: nowrap;
    color: #fff;
}

.note::after {
    content: "";
    position: absolute;
    top: 1px;
    right: 0;
    border-top: 9px solid #f0352b;
    border-left: 9px solid transparent;
}

.right .note {
    width: 256px;
    padding-left: 7px;
}

.right .indent {
    padding-left: 21px;
}

.pie-chart {
    display: flex;
    align-items: center;
    gap: 104px;
    padding: 35px 0 0 94px;
}

.pie {
    stroke: none;
    font-size: 17px;
    text-anchor: middle;
}

.pie text {
    fill: var(--label);
}

.slices {
    filter: drop-shadow(0 2px 3px rgba(0, 0, 0, 0.5));
}

.legend {
    display: flex;
    flex-direction: column;
    justify-content: space-between;
    height: 318px;
    font-size: 17px;
    line-height: 25px;
    color: var(--label);
}

.legend li {
    display: flex;
    align-items: center;
    gap: 3px;
}

.legend li::before {
    content: "";
    width: 10px;
    height: 10px;
    background: var(--fill);
}

.catering { --fill: linear-gradient(#8f93da, #6a6fca); }
.av { --fill: linear-gradient(#ec5d8b, #ed3278 50%, #d32d68); }
.photo { --fill: linear-gradient(#a9486d, #a61f5b 50%, #991e52); }
.ent { --fill: linear-gradient(#60abce, #4094bb); }
.transport { --fill: linear-gradient(#486486, #1e4a75 50%, #1b426a); }
.logistics { --fill: linear-gradient(#98a0b8, #76809e); }
.security { --fill: linear-gradient(#5252a8, #232a9d 50%, #1f2590); }
.cleaning { --fill: linear-gradient(#a94a65, #8f1d43); }
.printing { --fill: linear-gradient(#744459, #600f32 50%, #5a0e2e); }
.creative { --fill: linear-gradient(#48707f, #245b6e); }
.other { --fill: linear-gradient(#4a5561, #0e2b46 50%, #0c2840); }

.columns {
    display: flex;
    width: 923px;
    height: 349px;
    margin: 79px 0 0 8px;
    border-bottom: 2px solid #9a9bb0;
}

.col {
    flex: 1;
    display: flex;
    justify-content: center;
    align-items: flex-end;
}

.fill {
    display: flex;
    align-items: center;
    justify-content: center;
    width: 94px;
    font: 500 13px Roboto, sans-serif;
    color: var(--label);
}

.none {
    height: 30px;
}

.preferred { background: linear-gradient(#98a0b8, #8690ab 50%, #76809e); }
.approved { background: #eb3377; }
.trial { background: linear-gradient(#a9486d, #a61f5b 50%, #991e52); border: 2px solid #a61f5b; border-bottom: none; }
.blacklisted { background: linear-gradient(#486486, #1e4a75 50%, #1b426a); border: 2px solid #1e4a75; border-bottom: none; }

.column-labels {
    display: flex;
    width: 923px;
    margin: 8px 0 0 8px;
    font: 500 13px/20px Roboto, sans-serif;
    text-align: center;
    color: var(--label);
}

.column-labels span {
    flex: 1;
}

.bars {
    display: flex;
    flex-direction: column;
    width: 925px;
    height: 367px;
    margin-top: 33px;
    color: var(--label);
}

.bar-row {
    flex: 1;
    display: grid;
    grid-template-columns: 251px 1fr;
    align-items: center;
}

.bar-row > span {
    padding-right: 15px;
    text-align: right;
}

.track {
    display: flex;
    align-items: center;
    height: 100%;
    border-left: 2px solid #b4b5c2;
    background: linear-gradient(to right, transparent calc(100% - 1px), #343657 0) 0 0 / calc(100% / 9) 100%;
}

.bar {
    display: flex;
    align-items: center;
    justify-content: center;
    height: 15px;
    font-size: 18px;
}

.rating {
    background: linear-gradient(#8f93da, #777cd7 50%, #6a6fca);
    box-shadow: 0 2px 3px rgba(0, 0, 0, 0.4);
}

.days {
    background: linear-gradient(#ec5d8b, #ed3278 40%, #dd2f6e);
    box-shadow: 0 2px 3px rgba(0, 0, 0, 0.4);
}

.axis {
    display: flex;
    width: 746px;
    margin: 12px 0 0 215px;
    line-height: 22px;
    text-align: center;
    color: var(--label);
}

.axis span {
    flex: 1;
}

.legend.inline {
    flex-direction: row;
    justify-content: flex-start;
    gap: 40px;
    height: auto;
    margin: 11px 0 0 295px;
}

.leaderboard {
    width: 1003px;
    margin-top: 21px;
    border: 4px solid #fff;
    border-collapse: collapse;
    table-layout: fixed;
    text-align: center;
    color: #f4f4f6;
}

.leaderboard th, .leaderboard td {
    height: 24px;
    line-height: 24px;
}

.leaderboard th {
    font-weight: 700;
    color: #fff;
}

.selection {
    position: absolute;
    right: -8px;
    bottom: 47px;
    width: 28px;
    height: 28px;
    border: 2px solid #fff;
    outline: 3px solid var(--green);
}

/* Sheet tabs */
.sheet-tabs {
    flex: none;
    display: grid;
    grid-template-columns: 105px 138px 211px 168px 295px 271px 281px 67px;
    height: 48px;
    background: #333;
    border-top: 2px solid #7b7b7b;
    border-bottom: 2px solid #0f0f0f;
    font-size: 20px;
    color: #8e8e8e;
}

.scroll {
    display: flex;
    align-items: center;
    gap: 27px;
    padding-left: 25px;
}

.sheet-tab {
    background: linear-gradient(to right, #6b6b6b 2px, transparent 0) 0 0 / 2px 36px no-repeat #212121;
}

.sheet-tab.active {
    height: 38px;
    padding-top: 4px;
    background: #fff;
    border-radius: 0 0 5px 5px;
    font-weight: 700;
    color: #357a48;
}

.sheet-tab.active + .sheet-tab {
    background: #212121;
}

.sheet-tab.add {
    height: 38px;
    padding-top: 4px;
    background: #333;
    border-left: 2px solid #6b6b6b;
    border-right: 2px solid #6b6b6b;
}

/* Status bar */
.status {
    flex: none;
    display: flex;
    align-items: center;
    height: 38px;
    padding-left: 42px;
    background: linear-gradient(#4a4a4a, #3b3b3b);
    font-size: 21px;
    color: #f0f0f0;
}

.macro {
    margin: 0 27px 0 34px;
}

.access {
    gap: 5px;
}

.views {
    display: flex;
    height: 38px;
    margin: 0 12px 0 auto;
}

.view {
    width: 63px;
}

.view.on {
    background: #5d5d5d;
}

.zoom {
    appearance: none;
    width: 176px;
    height: 8px;
    margin: 0 11px;
    border-radius: 4px;
    background: #7e7e7e;
}

.zoom::-webkit-slider-thumb {
    appearance: none;
    width: 28px;
    height: 28px;
    border-radius: 50%;
    background: #a3a3a3;
}

.percent {
    width: 125px;
    padding-left: 33px;
}
```
